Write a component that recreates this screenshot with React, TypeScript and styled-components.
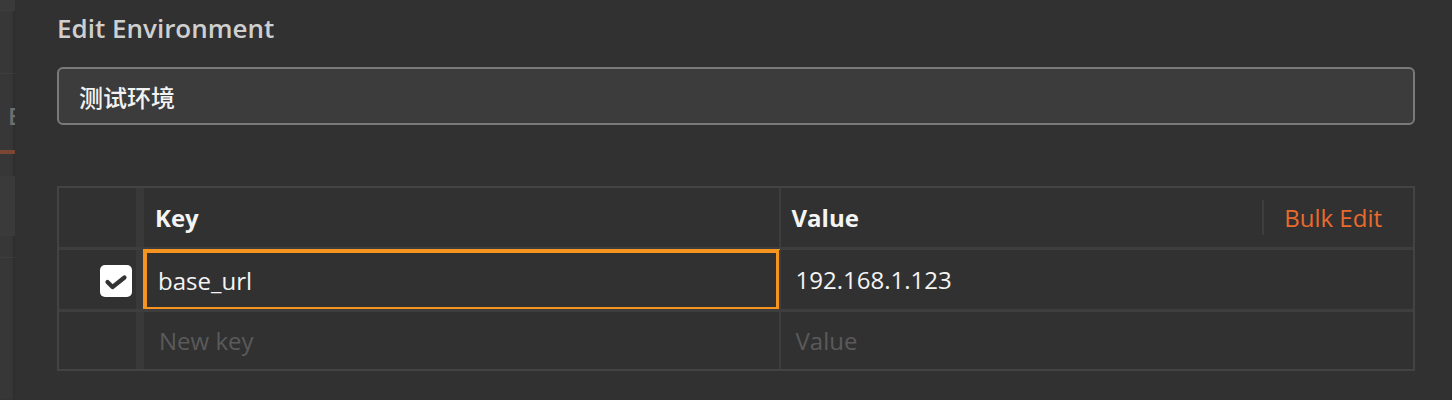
import styled, { createGlobalStyle } from 'styled-components';

const GlobalStyle = createGlobalStyle`
  html, body {
    margin: 0;
    padding: 0;
    background: #313131;
  }
  body {
    font-family: "Open Sans", "Noto Sans CJK SC", "Noto Sans", sans-serif;
    -webkit-font-smoothing: antialiased;
  }
`;

const Page = styled.div`
  display: flex;
  height: 400px;
  overflow: hidden;
  background: #313131;
`;

const SideStrip = styled.div`
  width: 15px;
  flex-shrink: 0;
  display: flex;
  flex-direction: column;
  background: #373737;
  box-shadow: inset -2px 0 2px rgba(0, 0, 0, 0.18);
  overflow: hidden;
`;

const StripBlock = styled.div<{ $h: number; $bg?: string; $line?: boolean }>`
  height: ${p => p.$h}px;
  flex-shrink: 0;
  background: ${p => p.$bg || 'transparent'};
  border-bottom: ${p => (p.$line ? '1px solid #3d3d3d' : 'none')};
`;

const StripTab = styled.div`
  height: 80px;
  flex-shrink: 0;
  display: flex;
  flex-direction: column;
  justify-content: space-between;
  overflow: hidden;
`;

// the tab label of the dimmed page behind is clipped by the strip, as in the screenshot
const StripLabel = styled.span`
  padding: 26px 0 0 8px;
  font-size: 24px;
  font-weight: 600;
  line-height: 32px;
  color: #6e6e6e;
  white-space: nowrap;
`;

const StripUnderline = styled.div`
  height: 4px;
  background: #7c4632;
`;

const Panel = styled.div`
  flex: 1;
  padding: 11px 37px 0 42px;
  display: flex;
  flex-direction: column;
`;

const Title = styled.h1`
  margin: 0;
  font-size: 26px;
  font-weight: 600;
  line-height: 34px;
  color: #cfcfcf;
`;

const NameInput = styled.div`
  margin-top: 22px;
  height: 58px;
  box-sizing: border-box;
  border: 2px solid #7a7a7a;
  border-radius: 6px;
  background: #3c3c3c;
  padding: 0 20px;
  display: flex;
  align-items: center;
  font-size: 24px;
  font-weight: 500;
  color: #f2f2f2;
`;

const Table = styled.div`
  margin-top: 61px;
  border: 2px solid #434343;
  display: flex;
  flex-direction: column;
`;

const Row = styled.div<{ $h: number }>`
  display: grid;
  grid-template-columns: 77px 8px 1fr 1fr;
  height: ${p => p.$h}px;
  & + & {
    border-top: 3px solid #3e3e3e;
  }
`;

const CheckCell = styled.div`
  display: flex;
  align-items: center;
  justify-content: flex-end;
  padding: 3px 4px 0 0;
`;

const Handle = styled.div`
  background: #393939;
`;

const Cell = styled.div<{ $divider?: boolean; $focused?: boolean; $header?: boolean }>`
  display: flex;
  align-items: center;
  box-sizing: border-box;
  padding-left: ${p => (p.$header ? 11 : 15)}px;
  border-left: ${p => (p.$divider ? '2px solid #3d3d3d' : 'none')};
  ${p => p.$focused && `
    border: 4px solid #f5941f;
    margin: -1px -1px -2px -1px;
    padding-left: 11px;
  `}
  font-size: 24px;
  color: #f4f4f4;
  font-weight: ${p => (p.$header ? 700 : 400)};
`;

const Placeholder = styled.span`
  color: #5a5a5a;
`;

const HeaderLabel = styled.span`
  flex: 1;
`;

const BulkEdit = styled.span`
  align-self: stretch;
  display: flex;
  align-items: center;
  margin: 12px 0;
  padding: 0 31px 0 20px;
  border-left: 2px solid #3d3d3d;
  font-weight: 400;
  color: #ea6a2d;
`;

const CheckBox = styled.div`
  width: 32px;
  height: 32px;
  border-radius: 5px;
  background: #ffffff;
  display: flex;
  align-items: center;
  justify-content: center;
`;

const CheckMark = () => (
  <svg width="32" height="32" viewBox="0 0 32 32">
    <path d="M7.5 17 L12.5 22 L24.5 12.5" fill="none" stroke="#333" strokeWidth="4.2" strokeLinecap="round" strokeLinejoin="round" />
  </svg>
);

export default function App() {
  return (
    <>
      <GlobalStyle />
      <Page>
        <SideStrip>
          <StripBlock $h={10} $bg="#3a3a3a" $line />
          <StripBlock $h={62} $line />
          <StripTab>
            <StripLabel>E</StripLabel>
            <StripUnderline />
          </StripTab>
          <StripBlock $h={22} />
          <StripBlock $h={60} $bg="#3a3a3a" />
          <StripBlock $h={21} $line />
        </SideStrip>
        <Panel>
          <Title>Edit Environment</Title>
          <NameInput>测试环境</NameInput>
          <Table>
            <Row $h={59}>
              <CheckCell />
              <Handle />
              <Cell $header>Key</Cell>
              <Cell $header $divider>
                <HeaderLabel>Value</HeaderLabel>
                <BulkEdit>Bulk Edit</BulkEdit>
              </Cell>
            </Row>
            <Row $h={59}>
              <CheckCell>
                <CheckBox><CheckMark /></CheckBox>
              </CheckCell>
              <Handle />
              <Cell $focused>base_url</Cell>
              <Cell $divider>192.168.1.123</Cell>
            </Row>
            <Row $h={57}>
              <CheckCell />
              <Handle />
              <Cell><Placeholder>New key</Placeholder></Cell>
              <Cell $divider><Placeholder>Value</Placeholder></Cell>
            </Row>
          </Table>
        </Panel>
      </Page>
    </>
  );
}
